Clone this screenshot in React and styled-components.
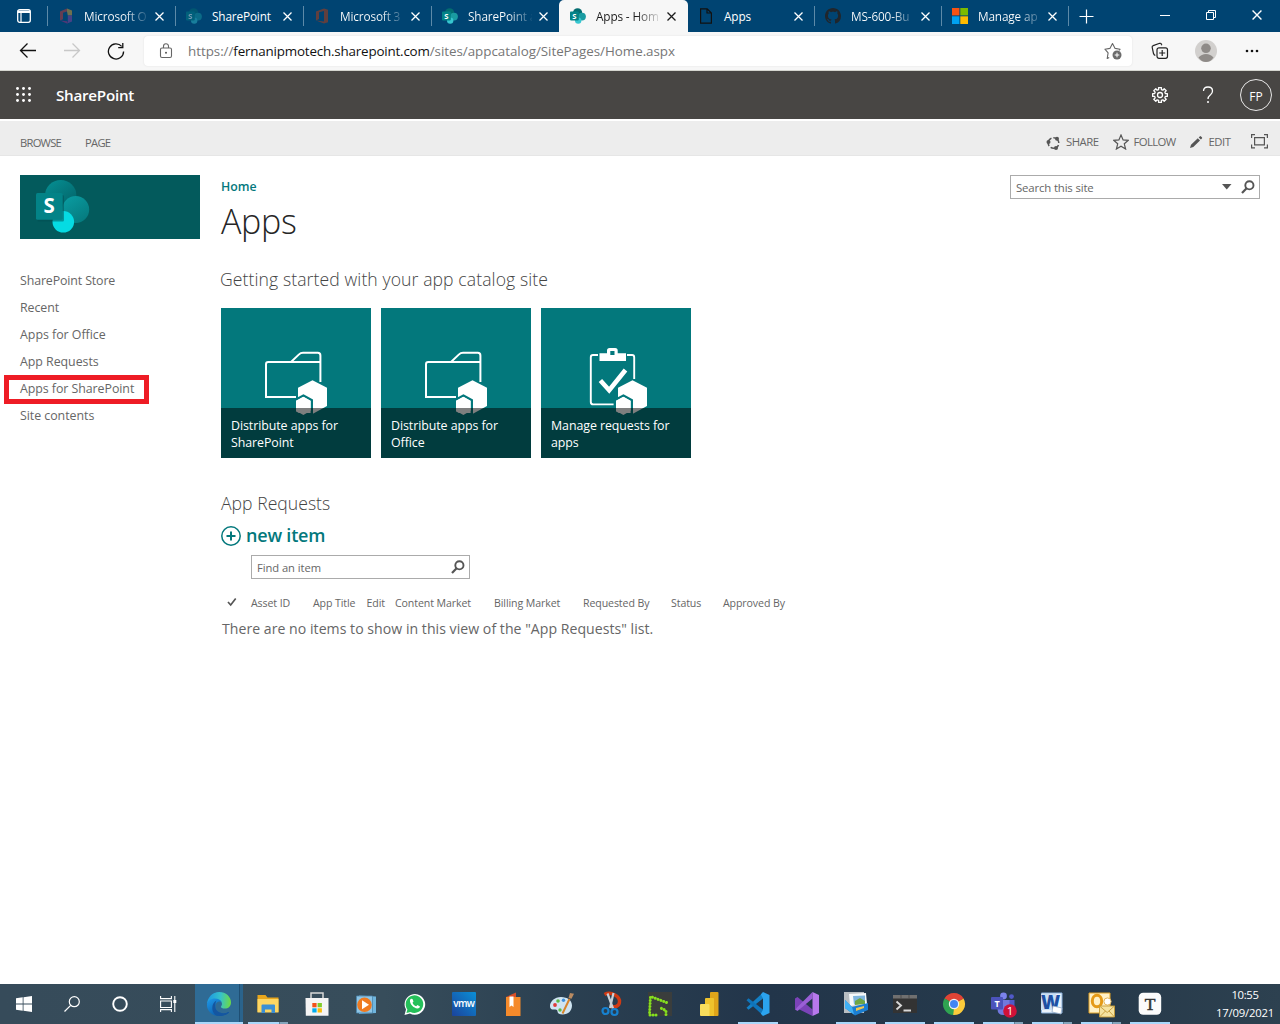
import React from "react";
import styled, { createGlobalStyle, css } from "styled-components";

const Global = createGlobalStyle`
  * { box-sizing: border-box; }
  html, body { margin: 0; padding: 0; }
  body {
    width: 1280px; height: 1024px; overflow: hidden; background: #fff;
    font-family: "Open Sans", "Noto Sans", "Liberation Sans", sans-serif;
    color: #666;
  }
`;

const Screen = styled.div`
  display: flex; flex-direction: column; width: 1280px; height: 1024px; background: #fff;
`;

const Label = styled.span`
  display: block; white-space: nowrap;
  font-size: ${p => p.$size || 12}px;
  font-weight: ${p => p.$weight || 400};
  letter-spacing: ${p => p.$track || 0}px;
  color: ${p => p.$color || "inherit"};
`;

/* ---------- browser tab strip ---------- */
const TabStrip = styled.div`
  display: flex; height: 32px; background: #004472; color: #fff;
`;
const TabMenu = styled.div`
  width: 48px; height: 32px; display: flex; align-items: center; justify-content: center;
`;
const Tab = styled.div`
  width: ${p => p.$width}px; height: 32px; padding: 0 0 0 ${p => (p.$active ? 11 : 10)}px;
  display: flex; align-items: center; color: ${p => (p.$active ? "#1b1b1b" : "#fff")};
  background: ${p => (p.$active ? "#f7f7f7" : "transparent")};
  border-radius: ${p => (p.$active ? "5px 5px 0 0" : "0")};
`;
const TabIcon = styled.span`
  display: flex; width: 16px; height: 16px; margin-right: 10px; opacity: ${p => (p.$dim ? 0.45 : 1)};
`;
const TabTitle = styled(Label)`
  width: ${p => p.$box}px; line-height: 18px; padding-bottom: 1px; color: ${p => (p.$fade ? "transparent" : "inherit")};
  ${p => p.$fade && css`
    background: linear-gradient(90deg, ${p.$ink} 40px, transparent 66px);
    background-clip: text; -webkit-background-clip: text;
  `}
`;
const TabClose = styled.span`
  display: flex; width: 22px; justify-content: center;
`;
const Divider = styled.i`
  width: 1px; height: 20px; margin: 6px 0 6px -1px; background: #5d8aa8;
`;
const NewTab = styled.div`
  width: 35px; display: flex; align-items: center; justify-content: center;
`;
const WindowButtons = styled.div`
  margin-left: auto; display: flex; height: 29px;
`;
const WindowButton = styled.span`
  width: 46px; display: flex; align-items: center; justify-content: center;
`;

/* ---------- address toolbar ---------- */
const Toolbar = styled.div`
  display: flex; align-items: center; height: 39px; background: #f7f7f7; border-bottom: 1px solid #d5d6d0;
  color: #1b1b1b;
`;
const NavButton = styled.span`
  width: 44px; display: flex; justify-content: center; opacity: ${p => (p.$off ? 0.2 : 1)};
`;
const NavButtons = styled.div`
  display: flex; width: 144px; padding-left: 6px;
`;
const AddressBar = styled.div`
  width: 988px; height: 30px; border-radius: 4px; background: #fff;
  box-shadow: 0 0 2px rgba(0,0,0,.1);
  display: flex; align-items: center; padding: 0 10px 0 14px;
`;
const Url = styled(Label)`
  flex: 1; margin-left: 14px; line-height: 20px; color: #767676;
  b { font-weight: 400; color: #111; letter-spacing: -.19px; }
`;
const ToolbarActions = styled.div`
  display: flex; align-items: center; margin-left: 5px;
`;
const ToolbarAction = styled.span`
  width: 46px; display: flex; justify-content: center;
`;

/* ---------- suite bar ---------- */
const SuiteBar = styled.div`
  display: flex; align-items: center; height: 48px; padding: 0 8px 0 16px;
  background: #484644; color: #fff;
`;
const SuiteName = styled(Label)` margin-left: 24px; line-height: 22px; `;
const SuiteActions = styled.div`
  margin-left: auto; display: flex; align-items: center;
`;
const SuiteAction = styled.span`
  display: flex; justify-content: center; width: 48px;
`;
const Initials = styled.span`
  width: 32px; height: 32px; border: 1px solid #e8e8e8; border-radius: 50%; margin-left: 8px;
  display: flex; align-items: center; justify-content: center; font-size: 12px; padding-top: 2px;
`;

/* ---------- ribbon ---------- */
const Ribbon = styled.div`
  display: flex; justify-content: space-between; height: 35px; margin-top: 2px; padding: 0 11px 0 20px;
  background: #ededed; border-bottom: 1px solid #e6e6e6; color: #666;
`;
const RibbonTabs = styled.div`
  display: flex; gap: 24px; padding-top: 13px; line-height: 18px;
`;
const RibbonActions = styled.div`
  display: flex; padding-top: 12px; line-height: 18px; height: 30px;
`;
const RibbonAction = styled.div`
  display: flex; align-items: center; gap: 5px; width: ${p => p.$width}px; height: 18px;
  svg { flex: none; }
`;

/* ---------- page body ---------- */
const Body = styled.div`
  flex: 1; display: flex; padding: 19px 20px 0;
`;
const Side = styled.aside` width: 201px; `;
const Logo = styled.div`
  width: 180px; height: 64px; background: #035a5c; margin-bottom: 28px;
  svg { display: block; }
`;
const SideLink = styled.div`
  position: relative; height: 27px; line-height: 27px; font-size: 12.4px; letter-spacing: ${p => p.$track}px;
  white-space: nowrap;
`;
const Highlight = styled.i`
  position: absolute; left: -16px; top: 0; width: 145px; height: 29px; border: 5px solid #ee1c25;
`;
const Main = styled.main` flex: 1; `;
const Crumb = styled(Label)` height: 22px; line-height: 24px; color: #03787c; `;
const Title = styled.h1`
  margin: 0; font-size: 34px; font-weight: 300; line-height: 48px; letter-spacing: ${p => p.$track}px; color: #262626;
`;
const Heading = styled.h2`
  margin: ${p => p.$margin}; font-size: 17.6px; font-weight: 300; line-height: 26px;
  letter-spacing: ${p => p.$track}px; color: #444; white-space: nowrap;
`;
const Tiles = styled.div` display: flex; gap: 10px; `;
const Tile = styled.div`
  width: 150px; height: 150px; background: #03787c; display: grid;
  > * { grid-area: 1 / 1; }
`;
const Caption = styled.div`
  align-self: end; height: 50px; padding: 9px 10px 0; background: rgba(0,0,0,.5); color: #fff;
  font-size: 12.4px; line-height: 17px; letter-spacing: -.07px; white-space: pre-line; z-index: 1;
`;
const NewItem = styled.div`
  display: flex; align-items: center; gap: 5px; height: 30px; color: #03787c;
  svg { margin-top: 1px; }
`;
const SearchBox = styled.div`
  display: flex; align-items: center; width: ${p => p.$width}px; height: 24px; margin: ${p => p.$margin || 0};
  border: 1px solid #ababab; padding: 0 4px 0 5px; color: #666; background: #fff;
  span { flex: 1; }
`;
const Columns = styled.div`
  display: flex; align-items: center; height: 20px; margin-top: 14px; padding-left: 6px;
`;
const Column = styled(Label)` width: ${p => p.$width}px; line-height: 20px; `;
const Empty = styled(Label)` margin: 5px 0 0 1px; line-height: 22px; `;

/* ---------- taskbar ---------- */
const Taskbar = styled.footer`
  display: flex; height: 40px; color: #fff;
  background: linear-gradient(90deg, #364b5a 0, #374d5b 30%, #2b4051 44%, #22354a 60%, #25394b 75%, #26394a 85%, #2d4150 100%);
`;
const SystemButton = styled.span`
  width: 48px; display: flex; align-items: center; justify-content: center;
`;
const Apps = styled.div` display: flex; margin-left: 2px; `;
const TaskButton = styled.span`
  width: 49px; height: 40px; display: flex; flex-direction: column; align-items: center;
  svg { margin-top: 8px; display: block; overflow: visible; }
  ${p => p.$current && css`
    background: linear-gradient(90deg, transparent 1px, #2f6b95 1px, #2f6b95 45px, #1f4f73 45px, #1f4f73 46px, #2a638c 46px);
  `}
`;
const Running = styled.i`
  width: ${p => (p.$wide ? 48 : 40)}px; height: 2px; margin-top: auto;
  background: ${p => (p.$stack
    ? "linear-gradient(90deg, #a9d8fb 31px, #5e7f96 31px, #5e7f96 32px, #83a4bb 32px)"
    : "#a9d8fb")};
`;
const Clock = styled.div`
  margin-left: auto; width: 70px; display: flex; flex-direction: column; align-items: center;
  padding-top: 2px; line-height: 18px;
`;

/* ---------- drawings ---------- */
const Svg = ({ w, h = w, vb, children, ...rest }) => (
  <svg width={w} height={h} viewBox={vb || `0 0 ${w} ${h}`} fill="none" {...rest}>{children}</svg>
);
const Cross = ({ c = "currentColor", s = 9 }) => (
  <Svg w={s} vb="0 0 9 9"><path d="M.5 .5l8 8M8.5 .5l-8 8" stroke={c} strokeWidth="1.25" /></Svg>
);
const OfficeMark = ({ multi }) => (
  <Svg w={16}>
    {multi ? (
      <>
        <path d="M2 3.5L9 .6v3l-4 1.2v6.400L2 12.400z" fill="#e0352c" />
        <path d="M2 12.400l7 .9 1 2-1 .2z" fill="#b5277a" />
        <path d="M9 .6l5 1.800v5H9.800L9 3.600z" fill="#f5a623" /><path d="M9.800 7.400H14v6L9.800 15.200z" fill="#9b3fa0" />
      </>
    ) : <path d="M2 3.5L10 0.6l4 1.2v12.4L10 15.4 2 12.6l8 .9V2.9L5 4.2v6.9L2 12.4z" fill="#d83b01" />}
  </Svg>
);
const SharePointMark = () => (
  <Svg w={16}>
    <circle cx="7.6" cy="4.8" r="4.6" fill="#036c70" /><circle cx="12" cy="8.6" r="3.9" fill="#1a9ba1" />
    <circle cx="8.2" cy="12.6" r="3.2" fill="#37c6d0" /><rect y="3.6" width="8.8" height="8.8" rx=".8" fill="#038387" />
    <text x="4.4" y="10.8" fontSize="7.6" fontWeight="700" fill="#fff" textAnchor="middle">S</text>
  </Svg>
);
const PageMark = () => (
  <Svg w={16}><path d="M2.6.8h6.6l4.2 4.2v10.2H2.6zM9 .8V5h4.400" stroke="#111" strokeWidth="1.2" /></Svg>
);
const GithubMark = () => (
  <Svg w={16}>
    <path fill="#20262c" d="M8 0C3.58 0 0 3.58 0 8c0 3.54 2.29 6.53 5.47 7.59.4.07.55-.17.55-.38 0-.19-.01-.82-.01-1.49-2.01.37-2.53-.49-2.69-.94-.09-.23-.48-.94-.82-1.13-.28-.15-.68-.52-.01-.53.63-.01 1.08.58 1.23.82.72 1.21 1.87.87 2.33.66.07-.52.28-.87.51-1.07-1.78-.2-3.64-.89-3.64-3.95 0-.87.31-1.59.82-2.15-.08-.2-.36-1.02.08-2.12 0 0 .67-.21 2.2.82.64-.18 1.32-.27 2-.27s1.36.09 2 .27c1.53-1.04 2.2-.82 2.2-.82.44 1.1.16 1.92.08 2.12.51.56.82 1.27.82 2.15 0 3.07-1.87 3.75-3.65 3.95.29.25.54.73.54 1.48 0 1.07-.01 1.93-.01 2.2 0 .21.15.46.55.38A8.01 8.01 0 0016 8c0-4.42-3.58-8-8-8z" />
  </Svg>
);
const MicrosoftMark = () => (
  <Svg w={16}>
    <path d="M0 0h7.4v7.4H0z" fill="#f65314" /><path d="M8.3 0H16v7.4H8.3z" fill="#7cbb00" />
    <path d="M0 8.3h7.4V16H0z" fill="#00a1f1" /><path d="M8.3 8.3H16V16H8.3z" fill="#ffbb00" />
  </Svg>
);
const Lens = () => (
  <Svg w={14}><circle cx="8.4" cy="5.3" r="4.1" stroke="#555" strokeWidth="1.9" /><path d="M5.6 8.300L1 13" stroke="#555" strokeWidth="2.200" /></Svg>
);

const AppHexes = () => (
  <>
    <path d="M91.5 72.2L106 79.7V98L91 106.3 77 98V79.7z" fill="#fff" />
    <path d="M82.4 87.5l8.4 4.6v14.6l-8.4 2.3-8.6-5V92.1z" fill="#fff" stroke="#03787c" strokeWidth="2.4" />
    <path d="M90.8 105v3h-18v-3z" fill="#03787c" />
    <path d="M82.4 88.8l7.2 4v10L82.4 107 75 102.8v-10z" fill="#fff" />
  </>
);
const FolderDrawing = () => (
  <Svg w={150}>
    <path d="M75 89H45V56.2q0-2.2 2.2-2.2H99.4M70 54l8-7.6q1.6-1.6 4-1.6H96.8q2.6 0 2.6 2.6V74" stroke="#fff" strokeWidth="2" />
    <AppHexes />
  </Svg>
);
const ClipboardDrawing = () => (
  <Svg w={150}>
    <path d="M57 47h-5q-2.2 0-2.2 2.2V94q0 2.400 2.400 2.400H73M86 47h5q2.200 0 2.200 2.200V71" stroke="#fff" strokeWidth="1.9" />
    <path fillRule="evenodd" d="M58.500 45.300h7.500V42.500q0-2.500 2.500-2.500h5.700q2.500 0 2.500 2.500v2.800H85V53H58.500zM69.300 43v4h4.200v-4z" fill="#fff" />
    <path d="M59.400 72.500l8.800 9.800L84.500 62" stroke="#fff" strokeWidth="4.600" />
    <AppHexes />
  </Svg>
);

/* ---------- taskbar drawings, each on a 24px grid ---------- */
const EdgeIcon = () => (
  <Svg w={24}>
    <defs>
      <linearGradient id="eg" x1="2" y1="6" x2="23" y2="8" gradientUnits="userSpaceOnUse"><stop stopColor="#1f9de0" /><stop offset=".55" stopColor="#37c2c9" /><stop offset="1" stopColor="#68d84f" /></linearGradient>
      <linearGradient id="eb" x1="4" y1="8" x2="14" y2="24" gradientUnits="userSpaceOnUse"><stop stopColor="#1b8fe0" /><stop offset="1" stopColor="#0c59a4" /></linearGradient>
    </defs>
    <path d="M0 12.4C.3 5.400 5.500 0 12.200 0 19 0 24 4.800 24 10.400c0 3.600-2.600 6.200-6.200 6.200-2.300 0-3.900-.8-3.900-1.800 0-.7 1.100-1.100 1.100-2.900 0-2-2.200-4.300-6-4.300C4.600 7.600 1.200 9.400 0 12.400z" fill="url(#eg)" />
    <path d="M0 12.400C.6 8.800 4 6.600 7.800 6.600c3.500 0 5.800 1.600 6.800 3.400-2.700-1.500-6.300.2-6.300 4.600 0 4.300 4.300 6.800 8.200 6.800 2 0 3.700-.6 5-1.300.4-.2.700.2.500.5C19.800 22.600 16.300 24 12.300 24 5.400 24-.4 19 0 12.400z" fill="url(#eb)" />
    <path d="M8.300 14.600c0 4.300 4.300 6.800 8.200 6.800 2 0 3.700-.6 5-1.300.4-.2.700.2.500.5C19.800 22.600 16.300 24 12.300 24c-4 0-7-3.500-7-8 0-3.500 1.600-6.300 4.200-7.500-1 1.800-1.200 3.700-1.200 6.100z" fill="#1556a0" />
  </Svg>
);
const ExplorerIcon = () => (
  <Svg w={24}>
    <path d="M1.500 3H9.500l2 2.500h11V20h-21z" fill="#e9a61c" /><path d="M1.500 7h21v13.500h-21z" fill="#fdd663" />
    <path d="M5.500 21v-7.500q0-1 1-1h11.500q1 0 1 1V21h-3.500v-3.500H9V21z" fill="#3b8fd5" />
  </Svg>
);
const StoreIcon = () => (
  <Svg w={24}>
    <path d="M6 7V1h12v6" stroke="#d8d8d8" strokeWidth="1.500" /><path d="M.5 6h23v17.800H.8z" fill="#f4f4f4" />
    <path d="M7.300 11h4.300v4.300H7.300z" fill="#f1511b" /><path d="M12.600 11h4.300v4.300h-4.300z" fill="#80cc28" />
    <path d="M7.300 16.300h4.300v4.200H7.300z" fill="#00adef" /><path d="M12.600 16.300h4.300v4.200h-4.300z" fill="#fbbc09" />
  </Svg>
);
const MediaIcon = () => (
  <Svg w={24}>
    <path d="M5 3.500l17 1V21l-17 1z" fill="#6fb5de" /><path d="M2.500 4H18.500v17H2.500z" fill="#8ec5e6" stroke="#4a86ae" strokeWidth=".8" />
    <circle cx="10.500" cy="12.800" r="7.300" fill="#ef7a20" /><path d="M8 8.300l7 4.500-7 4.500z" fill="#fff" />
  </Svg>
);
const WhatsappIcon = () => (
  <Svg w={24}>
    <path d="M1.500 23l1.500-5.400A10.300 10.300 0 1 1 6.900 21.400z" fill="#fff" />
    <path d="M3.400 21l1-3.600A8.800 8.800 0 1 1 7.500 20z" fill="#25c05a" />
    <path d="M8.200 6.800c-.9.300-1.400 1.300-1.200 2.600.6 3.300 3.600 6.400 7.300 7 1.300.1 2.500-.7 2.700-2l-2.600-1.400-1.200 1.300c-1.700-.6-3-1.900-3.700-3.500l1-1.200-1-2.600z" fill="#fff" />
  </Svg>
);
const VmwIcon = () => (
  <Svg w={24}>
    <defs><linearGradient id="vm" x1="24" y1="0" x2="0" y2="24" gradientUnits="userSpaceOnUse"><stop stopColor="#0a8fd6" /><stop offset="1" stopColor="#1b439c" /></linearGradient></defs>
    <rect width="24" height="24" rx="1" fill="url(#vm)" />
    <text x="11.800" y="15" textAnchor="middle" fontSize="10" fontWeight="600" letterSpacing="-.7" fill="#fff">vmw</text>
  </Svg>
);
const BookIcon = () => (
  <Svg w={24}>
    <path d="M5 5l10-4.500V6H5z" fill="#d94f27" /><path d="M5 5h14.500v19H5z" fill="#f58a2b" /><path d="M8.500 4.500H12.500V15l-2-1.500-2 1.500z" fill="#fff" />
  </Svg>
);
const PaintIcon = () => (
  <Svg w={24}>
    <path d="M11 5C4.500 5 0 9.500 0 14c0 3 2 4 4.500 3.500 2-.4 3 .5 3 2 0 2 2 3 5 3 6 0 9.500-4 9.500-9S17.500 5 11 5z" fill="#cfe4f1" />
    <circle cx="5" cy="13" r="1.900" fill="#e03a3a" /><circle cx="8" cy="9" r="1.800" fill="#5cb944" /><circle cx="13.500" cy="8.300" r="1.700" fill="#3d8ed8" /><circle cx="10" cy="18" r="1.700" fill="#5cb944" />
    <path d="M12.500 21.500L19.500 7" stroke="#d8842a" strokeWidth="2" /><path d="M18.500 6L20 1l4 .8-2.500 5z" fill="#b98b62" />
  </Svg>
);
const SnipIcon = () => (
  <Svg w={24}>
    <path d="M5.500 2.500C12-1 21 4 20.500 10c-.3 4-4 5.500-8.500 4.500" stroke="#d13a13" strokeWidth="3.400" />
    <path d="M8.500 1.500l5.500 15M14.500 1l-3.500 15" stroke="#c9d0d6" strokeWidth="2.200" />
    <circle cx="6.500" cy="19" r="3" stroke="#1681cf" strokeWidth="2.200" /><circle cx="15.500" cy="20" r="3" stroke="#1681cf" strokeWidth="2.200" />
  </Svg>
);
const DotsIcon = () => (
  <Svg w={24}>
    <path d="M0 0h24v24H0z" fill="#3a3d3c" />
    <path d="M18.500 10.500L2.500 4.500 1.500 23h8M18 22.500v-4l-6.500-3" stroke="#86e01e" strokeWidth="3" strokeDasharray=".01 3" strokeLinecap="round" />
  </Svg>
);
const PowerBiIcon = () => (
  <Svg w={24}>
    <path d="M14 0h6.500q1 0 1 1v22q0 1-1 1H13V1q0-1 1-1z" fill="#dfa41a" /><path d="M9 6h7q1 0 1 1v17H8V7q0-1 1-1z" fill="#efc32c" />
    <path d="M4 12h7.500q1 0 1 1v11H4q-1 0-1-1V13q0-1 1-1z" fill="#f8dd5c" />
  </Svg>
);
const CodeIcon = () => (
  <Svg w={24}>
    <path d="M.5 15.800L17 .6V6.500L2.500 17.800z" fill="#1380c6" /><path d="M.5 8.200L17 23.400V17.500L2.500 6.200z" fill="#0f74ba" />
    <path d="M17 0l6.500 3v18L17 24l-2.200-2.300 2.200-4V6.500l-2.200-4z" fill="#2ba3ee" />
  </Svg>
);
const StudioIcon = () => (
  <Svg w={24}>
    <path d="M0 6.500L2.500 5l15 12.500V24L2.500 16.500V9L5 12l-2.500 3.500L0 17.500z" fill="#7b43b8" />
    <path d="M0 17.500L2.500 19 17.500 6.500V0L9.500 8l-5 5z" fill="#9a5fd6" />
    <path d="M17.500 0L24 3v18l-6.500 3z" fill="#b878ec" />
  </Svg>
);
const PicturesIcon = () => (
  <Svg w={24}>
    <path d="M0 0h20v21H0z" fill="#b9bec2" /><path d="M5 2l17-1 1 11-17 2z" fill="#f7f9fa" /><path d="M9 4l12-.5v8l-11 1z" fill="#7fb5dd" /><path d="M11 9l5-3 5 3v3l-10 1z" fill="#6ea644" />
    <path d="M1 8l7 7 16-4v7l-13 5.500L1 16z" fill="#1b7ed1" /><path d="M1 8l7 7 2 7.500L1 16z" fill="#3fb0f4" />
    <path d="M12 16l8-2v2l-8 3z" fill="#f3c64f" />
  </Svg>
);
const TerminalIcon = () => (
  <Svg w={24}>
    <path d="M0 3h24v18H0z" fill="#333" /><path d="M0 3h24v3.500H0z" fill="#707070" /><path d="M8 3v3.500M16 3v3.500" stroke="#454545" strokeWidth=".8" />
    <path d="M3.500 9.500l4.500 4-4.500 4M10.500 18.500h7.500" stroke="#d8d8d8" strokeWidth="1.900" />
  </Svg>
);
const ChromeIcon = () => (
  <Svg w={24}>
    <path d="M12 12L2.470 6.500A11 11 0 0 1 21.530 6.500z" fill="#e04435" /><path d="M12 12L21.530 6.500A11 11 0 0 1 12 23z" fill="#fbcb3b" /><path d="M12 12V23A11 11 0 0 1 2.470 6.500z" fill="#2fa351" />
    <path d="M12 7h9.800l-.3-.6-9.500 5z" fill="#e04435" /><path d="M16.300 14.500L12 23l-.8-.1 1-8z" fill="#fbcb3b" /><path d="M7.700 14.500L2.500 6.500l7 4z" fill="#2fa351" />
    <circle cx="12" cy="12" r="5.200" fill="#f1f1f1" /><circle cx="12" cy="12" r="4" fill="#4285f4" />
  </Svg>
);
const TeamsIcon = () => (
  <Svg w={24}>
    <circle cx="12.500" cy="4" r="3.400" fill="#7b83eb" /><circle cx="20.500" cy="4.600" r="2.400" fill="#5059c9" />
    <path d="M15 8h8.500v7q0 4-4 4H15z" fill="#5059c9" /><path d="M6.500 8h12v9q0 6-6 6t-6-6z" fill="#7178de" />
    <rect y="5" width="12" height="12.500" rx="1" fill="#4b53bc" /><text x="6" y="14.500" fontSize="9" fontWeight="700" fill="#fff" textAnchor="middle">T</text>
    <circle cx="19" cy="19" r="6.800" fill="#cf1238" /><text x="19" y="23.200" fontSize="11.500" fill="#fff" textAnchor="middle">1</text>
  </Svg>
);
const WordIcon = () => (
  <Svg w={24}>
    <path d="M1.500 1H22v20H1.500z" fill="#eaf2fb" stroke="#89b0da" /><path d="M1 2h15v16H1z" fill="#c9dff5" />
    <text x="10.500" y="17" fontSize="18.500" fontWeight="800" fill="#1c4fa3" textAnchor="middle">W</text>
    <path d="M13 14l9 2-1 6-9-2z" fill="#fff" stroke="#8fa8c8" strokeWidth=".8" />
  </Svg>
);
const OutlookIcon = () => (
  <Svg w={24}>
    <path d="M0 1h21v20H0z" fill="#fff1c7" stroke="#e1a224" /><ellipse cx="8" cy="9" rx="4.700" ry="5.800" stroke="#e59a17" strokeWidth="3" />
    <circle cx="18.500" cy="9.500" r="3.600" fill="#fff" stroke="#e3b45a" /><path d="M10.500 14H25.500v11H10.500z" fill="#f6e3a0" stroke="#c59a35" strokeWidth=".9" /><path d="M10.500 14l7.700 6.500 7.300-6.500M10.500 25l6-6M25.500 25L20 19" stroke="#c59a35" strokeWidth=".9" />
  </Svg>
);
const TyporaIcon = () => (
  <Svg w={24}>
    <rect x=".7" y=".7" width="22.500" height="22" rx="4.500" fill="#fbfbfb" />
    <text x="12" y="17.600" fontFamily="Liberation Serif, serif" fontSize="17.500" fontWeight="400" stroke="#333" strokeWidth=".5" fill="#333" textAnchor="middle">T</text>
  </Svg>
);

const tabs = [
  { title: "Microsoft O", icon: <OfficeMark multi />, dim: true, width: 128, fade: true },
  { title: "SharePoint", icon: <SharePointMark />, dim: true, width: 128 },
  { title: "Microsoft 3", icon: <OfficeMark />, dim: true, width: 128, fade: true },
  { title: "SharePoint a", icon: <SharePointMark />, width: 127, fade: true, bare: true },
  { title: "Apps - Hom", icon: <SharePointMark />, width: 129, active: true, fade: true, bare: true },
  { title: "Apps", icon: <PageMark />, width: 127 },
  { title: "MS-600-Bu", icon: <GithubMark />, width: 127, fade: true },
  { title: "Manage ap", icon: <MicrosoftMark />, width: 127, fade: true },
];
const links = [
  ["SharePoint Store", -0.13], ["Recent", -0.06], ["Apps for Office", -0.02],
  ["App Requests", -0.04], ["Apps for SharePoint", -0.06], ["Site contents", -0.04],
];
const tiles = [
  { text: "Distribute apps for\nSharePoint", art: <FolderDrawing /> },
  { text: "Distribute apps for\nOffice", art: <FolderDrawing /> },
  { text: "Manage requests for\napps", art: <ClipboardDrawing /> },
];
const columns = [
  ["Asset ID", 62], ["App Title", 53.500], ["Edit", 28.500], ["Content Market", 99],
  ["Billing Market", 89], ["Requested By", 88], ["Status", 52], ["Approved By", 70],
];
const apps = [
  [EdgeIcon, "wide"], [ExplorerIcon, "stack"], [StoreIcon], [MediaIcon], [WhatsappIcon], [VmwIcon], [BookIcon],
  [PaintIcon], [SnipIcon], [DotsIcon], [PowerBiIcon], [CodeIcon, "one"], [StudioIcon], [PicturesIcon, "one"],
  [TerminalIcon, "one"], [ChromeIcon, "one"], [TeamsIcon, "stack"], [WordIcon, "stack"], [OutlookIcon, "stack"], [TyporaIcon, "one"],
];

const Browser = () => (
  <>
    <TabStrip>
      <TabMenu>
        <Svg w={14}><rect x=".7" y=".7" width="12.600" height="12.600" rx="2" stroke="#fff" strokeWidth="1.300" /><path d="M.7 1.500h12.600V4H.7z" fill="#fff" /><path d="M4 4v9" stroke="#fff" strokeWidth="1.200" /></Svg>
      </TabMenu>
      <Divider />
      {tabs.map((t, i) => (
        <React.Fragment key={i}>
          <Tab $width={t.width} $active={t.active}>
            <TabIcon $dim={t.dim}>{t.icon}</TabIcon>
            <TabTitle $size={11.8} $track={-0.15} $fade={t.fade} $ink={t.active ? "#1b1b1b" : "#fff"} $box={i > 4 ? 63 : 64}>{t.title}</TabTitle>
            <TabClose><Cross /></TabClose>
          </Tab>
          {!t.bare && <Divider />}
        </React.Fragment>
      ))}
      <NewTab><Svg w={15}><path d="M7.500 .5v14M.5 7.500h14" stroke="#fff" strokeWidth="1.200" /></Svg></NewTab>
      <WindowButtons>
        <WindowButton><Svg w={10}><path d="M0 5.500h10" stroke="#fff" /></Svg></WindowButton>
        <WindowButton><Svg w={10}><path d="M.5 2.500h7v7h-7zM2.500 2.500v-2h7v7h-2" stroke="#fff" /></Svg></WindowButton>
        <WindowButton><Cross s={10} /></WindowButton>
      </WindowButtons>
    </TabStrip>
    <Toolbar>
      <NavButtons>
        <NavButton><Svg w={18}><path d="M17 8.500H1.500M8.500 1.500l-7 7 7 7" stroke="#111" strokeWidth="1.300" /></Svg></NavButton>
        <NavButton $off><Svg w={18}><path d="M1 8.500h15.500M9.500 1.500l7 7-7 7" stroke="#111" strokeWidth="1.300" /></Svg></NavButton>
        <NavButton><Svg w={18}><path d="M16.600 9.500A7.600 7.600 0 1 1 14.700 4.400M15.800 1v4.600h-4.600" stroke="#111" strokeWidth="1.300" /></Svg></NavButton>
      </NavButtons>
      <AddressBar>
        <Svg w={16}><rect x="2.500" y="5" width="11" height="9.500" rx="1.500" stroke="#666" strokeWidth="1.100" /><path d="M5.500 5V3.200a2.500 2.500 0 0 1 5 0V5" stroke="#666" strokeWidth="1.100" /><circle cx="8" cy="9.700" r="1" fill="#555" /></Svg>
        <Url $size={13.4} $track={-0.04}>https://<b>fernanipmotech.sharepoint.com</b>/sites/appcatalog/SitePages/Home.aspx</Url>
        <Svg w={18}>
          <path d="M5.200 15.500l-2 1 .9-5.700L.9 7.200l5-.8L8.500 1.500l2.600 4.900 5 .8-1 1.200" stroke="#666" strokeWidth="1.100" strokeLinejoin="round" />
          <circle cx="13" cy="13" r="4.500" fill="#6b6b6b" /><path d="M13 10.700v4.600M10.700 13h4.600" stroke="#fff" />
        </Svg>
      </AddressBar>
      <ToolbarActions>
        <ToolbarAction>
          <Svg w={18}><path d="M4.300 13.500Q3 13 2.500 11.500L1.200 5.300q-.3-1.300 1-1.700l6.500-2.300q1.300-.3 1.700.9l.4 1" stroke="#222" strokeWidth="1.200" /><rect x="6" y="5.800" width="10.500" height="10.500" rx="2" stroke="#222" strokeWidth="1.200" /><path d="M11.200 8v6M8.200 11h6" stroke="#222" strokeWidth="1.200" /></Svg>
        </ToolbarAction>
        <ToolbarAction>
          <Svg w={22}><circle cx="11" cy="11" r="11" fill="#d2d0ce" /><circle cx="11" cy="8.300" r="4.800" fill="#8f8b88" /><path d="M3.500 17.500q3-3.500 7.500-3.500t7.500 3.500Q15.500 22 11 22t-7.500-4.500z" fill="#8f8b88" /></Svg>
        </ToolbarAction>
        <ToolbarAction><Svg w={14} h={4}><circle cx="2" cy="2" r="1.300" fill="#111" /><circle cx="7" cy="2" r="1.300" fill="#111" /><circle cx="12" cy="2" r="1.300" fill="#111" /></Svg></ToolbarAction>
      </ToolbarActions>
    </Toolbar>
  </>
);

const gear = Array.from({ length: 8 }, (_, i) => {
  const at = (r, d) => {
    const a = ((i * 45 + d) * Math.PI) / 180;
    return `${(8 + r * Math.cos(a)).toFixed(2)} ${(8 + r * Math.sin(a)).toFixed(2)}`;
  };
  return `${i ? "L" : "M"}${at(5.6, -14)}L${at(7.5, -11)}L${at(7.5, 11)}L${at(5.6, 14)}`;
}).join("") + "z";

const SharePointHeader = () => (
  <>
    <SuiteBar>
      <Svg w={16}>
        {[1.5, 7.5, 13.5].map(y => [1.5, 7.5, 13.5].map(x => <circle key={`${x}-${y}`} cx={x} cy={y} r="1.450" fill="#fff" />))}
      </Svg>
      <SuiteName $size={15.2} $weight={600} $track={-0.25}>SharePoint</SuiteName>
      <SuiteActions>
        <SuiteAction><Svg w={16}><path d={gear} stroke="#fff" strokeWidth="1.300" strokeLinejoin="round" /><circle cx="8" cy="8" r="2.500" stroke="#fff" strokeWidth="1.300" /></Svg></SuiteAction>
        <SuiteAction><Svg w={12} h={18}><path d="M1.500 5q0-4 4.500-4t4.500 4q0 2-2 3.700Q6 10.700 6 13" stroke="#fff" strokeWidth="1.300" /><circle cx="6" cy="16" r="1" fill="#fff" /></Svg></SuiteAction>
        <Initials>FP</Initials>
      </SuiteActions>
    </SuiteBar>
    <Ribbon>
      <RibbonTabs>
        <Label $size={11.200} $track={-0.75}>BROWSE</Label>
        <Label $size={11.200} $track={-0.7}>PAGE</Label>
      </RibbonTabs>
      <RibbonActions>
        <RibbonAction $width={66.500}>
          <Svg w={15}><circle cx="7.500" cy="8" r="5.300" stroke="#555" strokeWidth="1.500" strokeDasharray="9.100 2" strokeDashoffset="-2" /><circle cx="2.500" cy="7" r="2" fill="#555" /><circle cx="11" cy="3.800" r="2" fill="#555" /><circle cx="10" cy="13" r="2" fill="#555" /></Svg>
          <Label $size={11.300} $track={-0.5}>SHARE</Label>
        </RibbonAction>
        <RibbonAction $width={76}>
          <Svg w={16}><path d="M8 1l2.100 4.900 5.200.4-4 3.500 1.300 5.200L8 12.200 3.400 15l1.300-5.200-4-3.500 5.200-.4z" stroke="#555" strokeWidth="1.200" /></Svg>
          <Label $size={11.300} $track={-0.6}>FOLLOW</Label>
        </RibbonAction>
        <RibbonAction $width={62.500}>
          <Svg w={15}><path d="M1 13l1-3.200 6.800-6.600 2.200 2.200-6.700 6.700zM9.700 2.400l1-1q.7-.6 1.300 0l.9.900q.6.600 0 1.300l-1 1z" fill="#555" /></Svg>
          <Label $size={11.300} $track={-0.45}>EDIT</Label>
        </RibbonAction>
        <RibbonAction $width={18}>
          <Svg w={17} h={17}><path d="M.6 4V.6H4M13 .6h3.400V4M16.400 10.500v3.400H13M4 13.900H.6v-3.400M3.600 3.600h9.800v7.300H3.600z" stroke="#555" strokeWidth="1.200" /></Svg>
        </RibbonAction>
      </RibbonActions>
    </Ribbon>
  </>
);

const SiteLogo = () => (
  <Logo>
    <Svg w={180} h={64}>
      <defs>
        <linearGradient id="l1" x1="30" y1="6" x2="52" y2="36" gradientUnits="userSpaceOnUse"><stop stopColor="#058c90" /><stop offset="1" stopColor="#036065" /></linearGradient>
        <linearGradient id="l2" x1="46" y1="22" x2="64" y2="48" gradientUnits="userSpaceOnUse"><stop stopColor="#0a9ba0" /><stop offset="1" stopColor="#05797d" /></linearGradient>
      </defs>
      <circle cx="40.700" cy="20.700" r="15.700" fill="url(#l1)" />
      <circle cx="55.700" cy="34.500" r="13.500" fill="url(#l2)" />
      <circle cx="43.300" cy="46.800" r="10.800" fill="#05dbe3" />
      <rect x="17.500" y="20" width="26.500" height="26.500" rx="1.500" fill="#024c4f" opacity=".5" />
      <rect x="16" y="18" width="26.700" height="26.700" rx="1.500" fill="#038387" />
      <text x="29.200" y="38" fontSize="20.500" fontWeight="700" fill="#fff" textAnchor="middle">S</text>
    </Svg>
  </Logo>
);

export default function App() {
  return (
    <Screen>
      <Global />
      <Browser />
      <SharePointHeader />
      <Body>
        <Side>
          <SiteLogo />
          {links.map(([text, track]) => (
            <SideLink key={text} $track={track}>
              {text}
              {text === "Apps for SharePoint" && <Highlight />}
            </SideLink>
          ))}
        </Side>
        <Main>
          <Crumb $size={12.300} $weight={600}>Home</Crumb>
          <Title $track={-0.3}>Apps</Title>
          <Heading $margin="21px 0 16px -1px" $track={0.09}>Getting started with your app catalog site</Heading>
          <Tiles>
            {tiles.map(t => (
              <Tile key={t.text}>{t.art}<Caption>{t.text}</Caption></Tile>
            ))}
          </Tiles>
          <Heading $margin="32px 0 4px" $track={0.02}>App Requests</Heading>
          <NewItem>
            <Svg w={20}><circle cx="10" cy="10" r="9.200" stroke="#03787c" strokeWidth="1.500" /><path d="M10 5.500v9M5.500 10h9" stroke="#03787c" strokeWidth="2" /></Svg>
            <Label $size={18} $weight={600} $track={-0.2}>new item</Label>
          </NewItem>
          <SearchBox $width={219} $margin="5px 0 0 30px">
            <Label $size={11.200} $track={-0.06}>Find an item</Label><Lens />
          </SearchBox>
          <Columns>
            <Svg w={24} h={12}><path d="M1 5l2.700 3L8.700 1.500" stroke="#555" strokeWidth="1.700" /></Svg>
            {columns.map(([name, width]) => (
              <Column key={name} $width={width} $size={10.600} $track={-0.1}>{name}</Column>
            ))}
          </Columns>
          <Empty $size={14.100} $track={0.03}>There are no items to show in this view of the "App Requests" list.</Empty>
        </Main>
        <SearchBox $width={250}>
          <Label $size={11.400} $track={-0.16}>Search this site</Label>
          <Svg w={19} h={6}><path d="M0 0h9.500L4.750 5.500z" fill="#555" /></Svg><Lens />
        </SearchBox>
      </Body>
      <Taskbar>
        <SystemButton><Svg w={16}><path d="M0 2.300L6.700 1.300v6.300H0zM7.500 1.200L16 0v7.600H7.500zM0 8.400h6.700v6.300L0 13.700zM7.500 8.400H16V16l-8.500-1.200z" fill="#fff" /></Svg></SystemButton>
        <SystemButton><Svg w={16}><circle cx="10.300" cy="5.700" r="5" stroke="#fff" strokeWidth="1.200" /><path d="M6.700 9.300L.5 15.500" stroke="#fff" strokeWidth="1.200" /></Svg></SystemButton>
        <SystemButton><Svg w={16}><circle cx="8" cy="8" r="6.800" stroke="#fff" strokeWidth="1.900" /></Svg></SystemButton>
        <SystemButton><Svg w={17} h={16}><path d="M.6 0v2.600h10.800V0M.6 5h10.800v6.500H.6zM.6 16v-2.400h10.800V16M14.800 0v16" stroke="#fff" strokeWidth="1.100" /><path d="M13.300 4h3v3h-3z" fill="#fff" /></Svg></SystemButton>
        <Apps>
          {apps.map(([Icon, run], i) => (
            <TaskButton key={i} $current={run === "wide"}>
              <Icon />
              {run && <Running $wide={run === "wide"} $stack={run === "stack"} />}
            </TaskButton>
          ))}
        </Apps>
        <Clock>
          <Label $size={11.300} $track={-0.35}>10:55</Label>
          <Label $size={11.300} $track={-0.2}>17/09/2021</Label>
        </Clock>
      </Taskbar>
    </Screen>
  );
}
